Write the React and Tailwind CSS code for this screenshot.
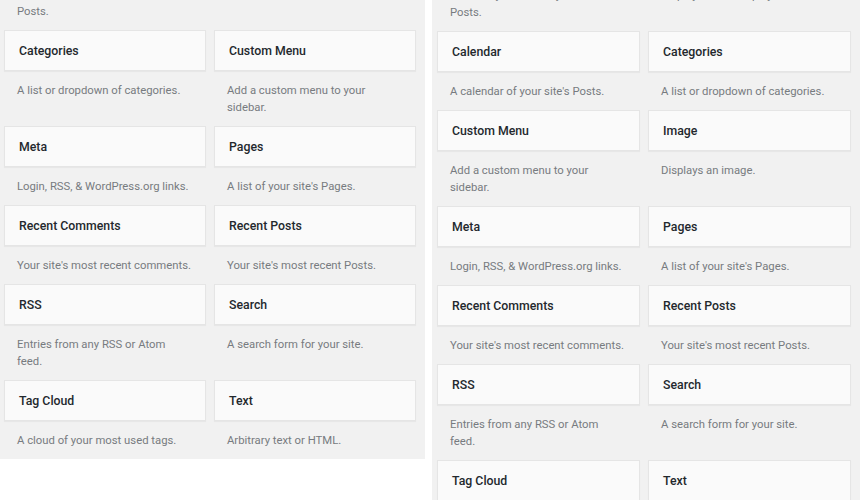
const LEFT = [
  ["Archives", "A monthly archive of your site's\nPosts."],
  ["Calendar", "A calendar of your site's Posts."],
  ["Categories", "A list or dropdown of categories."],
  ["Custom Menu", "Add a custom menu to your\nsidebar."],
  ["Meta", "Login, RSS, & WordPress.org links."],
  ["Pages", "A list of your site's Pages."],
  ["Recent Comments", "Your site's most recent comments."],
  ["Recent Posts", "Your site's most recent Posts."],
  ["RSS", "Entries from any RSS or Atom\nfeed."],
  ["Search", "A search form for your site."],
  ["Tag Cloud", "A cloud of your most used tags."],
  ["Text", "Arbitrary text or HTML."],
];

const RIGHT = [
  ["Archives", "A monthly archive of your site's\nPosts."],
  ["Audio", "Displays an audio player."],
  ["Calendar", "A calendar of your site's Posts."],
  ["Categories", "A list or dropdown of categories."],
  ["Custom Menu", "Add a custom menu to your\nsidebar."],
  ["Image", "Displays an image."],
  ["Meta", "Login, RSS, & WordPress.org links."],
  ["Pages", "A list of your site's Pages."],
  ["Recent Comments", "Your site's most recent comments."],
  ["Recent Posts", "Your site's most recent Posts."],
  ["RSS", "Entries from any RSS or Atom\nfeed."],
  ["Search", "A search form for your site."],
  ["Tag Cloud", "A cloud of your most used tags."],
  ["Text", "Arbitrary text or HTML."],
];

function Widget({ title, desc }) {
  return (
    <div className="flex flex-col">
      <div className="h-[41px] flex items-center px-[14px] bg-[#fafafa] border border-[#e5e5e5] shadow-[0_1px_1px_rgba(0,0,0,0.04)]">
        <h3 className="text-[12.3px] font-medium text-[#23282d] pt-[2px]">{title}</h3>
      </div>
      <p className="pt-[11px] pb-[10px] pl-[13px] pr-[6px] text-[11.3px] leading-[17px] text-[#777b80] whitespace-pre-line">{desc}</p>
    </div>
  );
}

export default function App() {
  return (
    <div className="w-[860px] h-[500px] overflow-hidden bg-white flex items-start gap-[7px] font-['Roboto',sans-serif]">
      {/* left: widgets list */}
      <section className="w-[425px] bg-[#f1f1f1] pl-[4px] pr-[9px] -mt-[66px]">
        <div className="grid grid-cols-[202px_202px] gap-x-[8px]">
          {LEFT.map(([t, d]) => (
            <Widget key={t} title={t} desc={d} />
          ))}
        </div>
      </section>

      {/* right: same list, newer version */}
      <section className="flex-1 self-stretch bg-[#f1f1f1] pl-[5px] pr-[9px] -mt-[65px]">
        <div className="grid grid-cols-[203px_203px] gap-x-[8px]">
          {RIGHT.map(([t, d]) => (
            <Widget key={t} title={t} desc={d} />
          ))}
        </div>
      </section>
    </div>
  );
}
